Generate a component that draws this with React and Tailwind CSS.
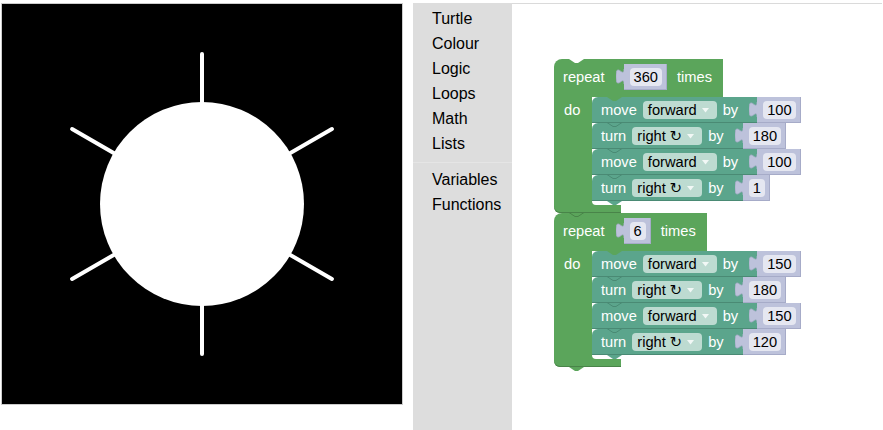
import React from 'react';

const rays = [0, 60, 120, 180, 240, 300];

function TurtleCanvas() {
    return (
        <div className="h-[402px] w-[402px] border border-[#cccccc]">
            <svg width="400" height="400" className="block bg-black">
                {rays.map((a) => {
                    const r = (a * Math.PI) / 180;
                    return (
                        <line
                            key={a}
                            x1="200"
                            y1="200"
                            x2={200 + 150 * Math.sin(r)}
                            y2={200 - 150 * Math.cos(r)}
                            stroke="white"
                            strokeWidth="4"
                            strokeLinecap="round"
                        />
                    );
                })}
                <circle cx="200" cy="200" r="102" fill="white" />
            </svg>
        </div>
    );
}

const toolboxTop = ['Turtle', 'Colour', 'Logic', 'Loops', 'Math', 'Lists'];
const toolboxBottom = ['Variables', 'Functions'];

function Toolbox() {
    return (
        <div className="ml-[10px] flex h-[427px] w-[99px] flex-col bg-[#dddddd] pt-[3px] text-[16px] text-black">
            {toolboxTop.map((t) => (
                <div key={t} className="flex h-[25px] items-center pl-[19px]">{t}</div>
            ))}
            <div className="mb-[4px] mt-[6px] h-px bg-[#e5e5e5]" />
            {toolboxBottom.map((t) => (
                <div key={t} className="flex h-[25px] items-center pl-[19px]">{t}</div>
            ))}
        </div>
    );
}

// number shadow block plugged into a value input
function Num({ v }) {
    return (
        <div className="relative flex h-[26px] items-center bg-[#bdc2db] pl-[6px] pr-[5px] shadow-[inset_-1px_-1px_0_#a6abc8]">
            <svg className="absolute -left-[8px] top-[5px]" width="8" height="15" viewBox="-8 0 8 15">
                <path d="M0,0 c0,10 -8,-8 -8,7.5 s8,-2.5 8,7.5 Z" fill="#bdc2db" />
                <path d="M0,0 c0,10 -8,-8 -8,7.5 s8,-2.5 8,7.5" fill="none" stroke="#a6abc8" strokeWidth="0.8" />
            </svg>
            <div className="h-[18px] rounded-[4px] bg-[#e5e7f1] px-[4px] leading-[18px] text-black">{v}</div>
        </div>
    );
}

function Dropdown({ label }) {
    return (
        <div className="flex h-[18px] items-center rounded-[4px] bg-[#bddbd1] pl-[5px] pr-[8px] text-black">
            <span className="leading-[18px]">{label}</span>
            <svg className="ml-[5px]" width="7" height="5" viewBox="0 0 7 5">
                <polygon points="0,0 7,0 3.5,4.5" fill="#ffffff" fillOpacity="0.8" />
            </svg>
        </div>
    );
}

function Stmt({ kind, value, first, last }) {
    return (
        <div className="relative flex h-[26px] items-stretch">
            <div className="flex items-center gap-[6px] rounded-tl-[6px] bg-[#5ba58c] pl-[9px] pr-[19px] shadow-[inset_0_-1px_0_#4a8a74]">
                {kind === 'move' ? (
                    <>
                        <span>move</span>
                        <Dropdown label="forward" />
                    </>
                ) : (
                    <>
                        <span>turn</span>
                        <Dropdown label="right ↻" />
                    </>
                )}
                <span>by</span>
            </div>
            <Num v={value} />
            {first ? (
                <svg className="absolute left-[15px] top-0" width="15" height="4" viewBox="0 0 15 4">
                    <polygon points="0,0 6,4 9,4 15,0" fill="#5ba55b" />
                </svg>
            ) : (
                <svg className="absolute left-[15px] -top-px" width="15" height="5" viewBox="0 0 15 5">
                    <polyline points="0,0.5 6,4.5 9,4.5 15,0.5" fill="none" stroke="#4a8a74" strokeWidth="1" />
                </svg>
            )}
            {last && (
                <svg className="absolute -bottom-[4px] left-[15px]" width="15" height="4" viewBox="0 0 15 4">
                    <polygon points="0,0 6,4 9,4 15,0" fill="#5ba58c" />
                </svg>
            )}
        </div>
    );
}

function Repeat({ times, first, rows }) {
    return (
        <div className="relative flex flex-col items-start">
            <div className="flex items-center rounded-tl-[8px] bg-[#5ba55b] pb-[7px] pl-[9px] pr-[11px] pt-[5px]">
                <span>repeat</span>
                <div className="ml-[19px]">
                    <Num v={times} />
                </div>
                <span className="ml-[10px]">times</span>
            </div>
            <div className="flex">
                <div className="w-[38px] bg-[#5ba55b] pl-[10px]">
                    <div className="flex h-[26px] items-center">do</div>
                </div>
                <div className="flex flex-col items-start">
                    {rows.map((r, i) => (
                        <Stmt key={i} kind={r[0]} value={r[1]} first={i === 0} last={i === rows.length - 1} />
                    ))}
                    <div className="w-[29px] bg-[#5ba55b]">
                        <div className="h-[4px] rounded-bl-[4px] bg-white" />
                    </div>
                </div>
            </div>
            <div className="relative h-[8px] w-[67px] rounded-bl-[6px] bg-[#5ba55b] shadow-[inset_0_-1px_0_#498449]">
                {!first && (
                    <svg className="absolute -bottom-[4px] left-[15px]" width="15" height="4" viewBox="0 0 15 4">
                        <polygon points="0,0 6,4 9,4 15,0" fill="#5ba55b" />
                    </svg>
                )}
            </div>
            {first ? (
                <svg className="absolute left-[15px] top-0" width="15" height="4" viewBox="0 0 15 4">
                    <polygon points="0,0 6,4 9,4 15,0" fill="#ffffff" />
                </svg>
            ) : (
                <svg className="absolute left-[15px] -top-px" width="15" height="5" viewBox="0 0 15 5">
                    <polyline points="0,0.5 6,4.5 9,4.5 15,0.5" fill="none" stroke="#498449" strokeWidth="1" />
                </svg>
            )}
        </div>
    );
}

function Workspace() {
    return (
        <div className="relative h-[427px] w-[370px] overflow-hidden border-t border-[#dadada] bg-white">
            <div className="absolute left-[42px] top-[55px] flex flex-col text-[11pt] text-white">
                <Repeat
                    times="360"
                    first
                    rows={[['move', '100'], ['turn', '180'], ['move', '100'], ['turn', '1']]}
                />
                <Repeat
                    times="6"
                    rows={[['move', '150'], ['turn', '180'], ['move', '150'], ['turn', '120']]}
                />
            </div>
        </div>
    );
}

export default function App() {
    return (
        <div className="flex h-[430px] w-[883px] overflow-hidden bg-white pl-[1px] pt-[3px] font-['Liberation_Sans','DejaVu_Sans',Arial,sans-serif]">
            <TurtleCanvas />
            <Toolbox />
            <Workspace />
        </div>
    );
}
